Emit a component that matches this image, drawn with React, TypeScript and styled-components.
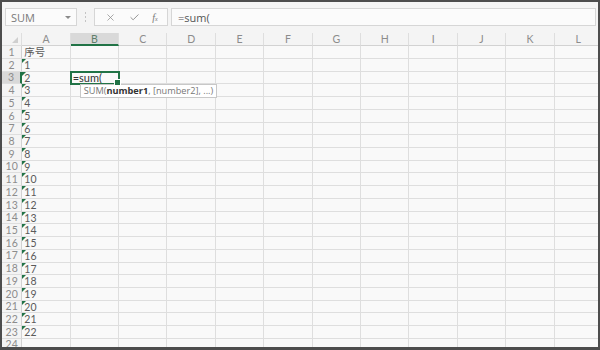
import React from "react";
import styled, { createGlobalStyle, css } from "styled-components";
import { X, Check } from "lucide-react";

const Global = createGlobalStyle`
  html, body { margin: 0; padding: 0; background: #ffffff; }
  * { box-sizing: border-box; }
`;

const FONT = `"Open Sans", "Noto Sans", "Noto Sans CJK SC", sans-serif`;
const GRID_FONT = `Lato, "Open Sans", "Noto Sans CJK SC", sans-serif`;
const GREEN = "#217346";
const LINE = "#dedede";

const Frame = styled.div`
  width: 600px;
  height: 350px;
  border: 2px solid #4d4d4d;
  border-bottom-width: 3px;
  background: #f4f4f4;
  overflow: hidden;
  font-family: ${FONT};
`;

const FormulaBar = styled.div`
  display: flex;
  align-items: stretch;
  height: 18px;
  margin: 6px 2px 0 3px;
`;

const Box = styled.div`
  background: #fbfbfb;
  border: 1px solid #d6d6d6;
  display: flex;
  align-items: center;
`;

const NameBox = styled(Box)`
  width: 72px;
  justify-content: space-between;
  padding: 0 5px 0 5px;
  font-size: 11px;
  color: #7a7a7a;
`;

const DropArrow = styled.span`
  width: 0;
  height: 0;
  border-left: 3px solid transparent;
  border-right: 3px solid transparent;
  border-top: 3px solid #8a8a8a;
`;

const Dots = styled.div`
  width: 17px;
  display: flex;
  flex-direction: column;
  align-items: center;
  justify-content: center;
  gap: 2px;
  & > span {
    width: 1px;
    height: 2px;
    background: #c4c4c4;
  }
`;

const Buttons = styled(Box)`
  width: 74px;
  justify-content: space-around;
  padding: 0 3px 0 4px;
  color: #8a8a8a;
`;

const Fx = styled.span`
  font-family: "Liberation Serif", serif;
  font-style: italic;
  font-size: 10px;
  color: #777;
  & > sub {
    font-size: 6px;
    vertical-align: baseline;
  }
`;

const FormulaInput = styled(Box)`
  flex: 1;
  margin-left: 3px;
  padding-left: 6px;
  font-size: 11px;
  color: #555;
`;

const Grid = styled.div`
  margin-top: 7px;
  display: grid;
  grid-template-columns: 20.3px repeat(12, 48.4px);
  grid-template-rows: 13.3px repeat(24, 12.73px);
  font-family: ${GRID_FONT};
`;

const Corner = styled.div`
  position: relative;
  border-bottom: 1px solid ${LINE};
  border-right: 1px solid ${LINE};
  &::after {
    content: "";
    position: absolute;
    right: 3px;
    bottom: 2px;
    width: 0;
    height: 0;
    border-left: 6px solid transparent;
    border-bottom: 6px solid #cfcfcf;
  }
`;

const ColHead = styled.div<{ $active?: boolean }>`
  display: flex;
  align-items: center;
  justify-content: center;
  font-size: 10.5px;
  color: #8c8c8c;
  border-right: 1px solid ${LINE};
  border-bottom: 1px solid #d2d2d2;
  ${(p) =>
    p.$active &&
    css`
      background: #d9d9d9;
      color: #5f7f6c;
      border-bottom: 2px solid ${GREEN};
    `}
`;

const RowHead = styled.div<{ $active?: boolean }>`
  display: flex;
  align-items: center;
  justify-content: center;
  font-size: 10.5px;
  color: #8c8c8c;
  border-bottom: 1px solid ${LINE};
  border-right: 1px solid #d2d2d2;
  line-height: 1;
  ${(p) =>
    p.$active &&
    css`
      background: #d9d9d9;
      border-right: 2px solid ${GREEN};
    `}
`;

const Cell = styled.div<{ $flag?: boolean; $selected?: boolean }>`
  position: relative;
  background: #f9f9f9;
  border-right: 1px solid ${LINE};
  border-bottom: 1px solid ${LINE};
  font-size: 10.5px;
  line-height: 12px;
  padding-left: 2px;
  color: #5a5a5a;
  white-space: nowrap;
  ${(p) =>
    p.$flag &&
    css`
      &::before {
        content: "";
        position: absolute;
        left: 0;
        top: 0;
        width: 0;
        height: 0;
        border-top: 4px solid ${GREEN};
        border-right: 4px solid transparent;
      }
    `}
  ${(p) =>
    p.$selected &&
    css`
      z-index: 2;
      color: #333;
      font-size: 11px;
      outline: 2px solid ${GREEN};
      outline-offset: -1px;
      &::after {
        content: "";
        position: absolute;
        right: -3px;
        bottom: -3px;
        width: 5px;
        height: 5px;
        background: ${GREEN};
        border: 1px solid #fff;
      }
    `}
`;

const Tip = styled.div`
  position: absolute;
  left: 9px;
  top: 100%;
  margin-top: 1px;
  height: 14px;
  padding: 0 3px;
  background: #fff;
  border: 1px solid #c8c8c8;
  font-family: ${FONT};
  font-size: 9.2px;
  line-height: 12px;
  color: #777;
  white-space: nowrap;
  & > b {
    color: #333;
    font-weight: 700;
  }
`;

const COLS = ["A", "B", "C", "D", "E", "F", "G", "H", "I", "J", "K", "L"];
const ROWS = 24;

function cellContent(r: number, c: number): React.ReactNode {
  if (c === 0) {
    if (r === 1) return "序号";
    if (r >= 2 && r <= 23) return String(r - 1);
  }
  return null;
}

export default function App() {
  return (
    <>
      <Global />
      <Frame>
        <FormulaBar>
          <NameBox>
            <span>SUM</span>
            <DropArrow />
          </NameBox>
          <Dots>
            <span />
            <span />
            <span />
          </Dots>
          <Buttons>
            <X size={11} strokeWidth={1.6} />
            <Check size={11} strokeWidth={2} />
            <Fx>
              f<sub>x</sub>
            </Fx>
          </Buttons>
          <FormulaInput>=sum(</FormulaInput>
        </FormulaBar>
        <Grid>
          <Corner />
          {COLS.map((c) => (
            <ColHead key={c} $active={c === "B"}>
              {c}
            </ColHead>
          ))}
          {Array.from({ length: ROWS }, (_, i) => {
            const r = i + 1;
            return (
              <React.Fragment key={r}>
                <RowHead $active={r === 3}>{r}</RowHead>
                {COLS.map((c, ci) => {
                  const selected = r === 3 && ci === 1;
                  return (
                    <Cell
                      key={c}
                      $flag={ci === 0 && r >= 2 && r <= 23}
                      $selected={selected}
                    >
                      {selected ? (
                        <>
                          =sum(
                          <Tip>
                            SUM(<b>number1</b>, [number2], ...)
                          </Tip>
                        </>
                      ) : (
                        cellContent(r, ci)
                      )}
                    </Cell>
                  );
                })}
              </React.Fragment>
            );
          })}
        </Grid>
      </Frame>
    </>
  );
}
